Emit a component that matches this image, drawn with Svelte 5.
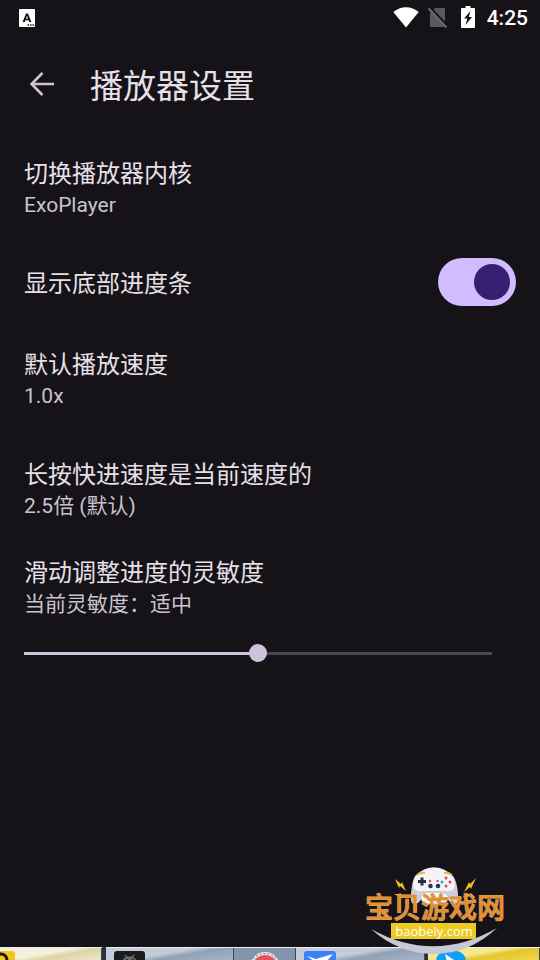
<script>
  let bottomBar = $state(true);
  let sensitivity = $state(5);
  const levels = ['很低', '较低', '适中', '较高', '很高'];
  let level = $derived(levels[Math.min(4, Math.floor(sensitivity / 2.2))]);
</script>

<svelte:head><title>播放器设置</title></svelte:head>

<div class="page">
  <header class="status">
    <svg class="notice" width="16" height="18" viewBox="0 0 16 18" aria-hidden="true">
      <rect width="16" height="18" rx="1" fill="#fff" />
      <path d="M3.600 13 7 4.400h2L12.400 13h-2.200l-.6-1.700H6.400L5.800 13ZM7 9.700h2L8 6.800Z" fill="#151218" />
      <path d="M8.500 15.300H10v1.400H8.500ZM11 15.300h1.500v1.400H11ZM13.500 15.300H15v1.400h-1.500Z" fill="#151218" />
    </svg>
    <div class="indicators">
      <svg width="26" height="21" viewBox="0 0 26 21" aria-hidden="true">
        <path d="M13 20.500.300 4.900C4 2 8.300.300 13 .300S22 2 25.700 4.900Z" fill="#fff" />
      </svg>
      <svg class="sim" width="20" height="21" viewBox="0 0 20 21" aria-hidden="true">
        <path d="M7 1h9q1 0 1 1v17q0 1-1 1H3q-1 0-1-1V6Z" fill="#5b595e" />
        <path d="M2.200.500 20 19.300" stroke="#151218" stroke-width="2" />
        <path d="M.500 1.500 18.500 20.500" stroke="#6b696d" stroke-width="2" />
      </svg>
      <svg class="battery" width="14" height="22" viewBox="0 0 14 22" aria-hidden="true">
        <path d="M4.500 0h5v2H13q1 0 1 1v18q0 1-1 1H1q-1 0-1-1V3q0-1 1-1h3.500Z" fill="#fff" />
        <path d="M9.500 5 3 12.500h3.300L4.500 19 11 11H7.800Z" fill="#151218" />
      </svg>
      <time>4:25</time>
    </div>
  </header>

  <div class="appbar">
    <button class="back" aria-label="返回">
      <svg width="24" height="24" viewBox="0 0 24 24" aria-hidden="true">
        <path d="M24 12H2M12.500 1 1.500 12l11 11" fill="none" stroke="#cac5cd" stroke-width="2.600" />
      </svg>
    </button>
    <h1>播放器设置</h1>
  </div>

  <main>
    <button class="row">
      <span class="name">切换播放器内核</span>
      <span class="value">ExoPlayer</span>
    </button>
    <div class="row toggle">
      <label class="name" for="bottom-bar">显示底部进度条</label>
      <input id="bottom-bar" type="checkbox" role="switch" bind:checked={bottomBar} />
    </div>
    <button class="row">
      <span class="name">默认播放速度</span>
      <span class="value">1.0x</span>
    </button>
    <button class="row">
      <span class="name">长按快进速度是当前速度的</span>
      <span class="value">2.5倍 (默认)</span>
    </button>
    <div class="row slide">
      <label class="name" for="sensitivity">滑动调整进度的灵敏度</label>
      <span class="value">当前灵敏度：{level}</span>
      <input
        id="sensitivity"
        type="range"
        min="0"
        max="10"
        bind:value={sensitivity}
        style="--fill: {sensitivity * 10}%"
      />
    </div>
  </main>

  <footer class="tasks" aria-hidden="true">
    <div class="task cream">
      <svg width="15" height="11" viewBox="0 0 15 11">
        <path d="M0 0h12q3 0 3 3v8H0Z" fill="#f5c51c" />
        <circle cx="1" cy="9" r="6" fill="none" stroke="#17140c" stroke-width="3" />
      </svg>
    </div>
    <div class="task steel droid">
      <svg width="31" height="11" viewBox="0 0 31 11">
        <path d="M0 11V3q0-3 3-3h25q3 0 3 3v8Z" fill="#1b1b1b" />
        <path d="M8 11q1-4 4-5l-2-2 1-.500 2.500 2h4l2.500-2 1 .500-2 2q3 1 4 5Z" fill="#696969" />
        <path d="M12 8h1.500v1.500H12ZM18 8h1.500v1.500H18Z" fill="#1b1b1b" />
      </svg>
    </div>
    <div class="task slate">
      <svg width="32" height="11" viewBox="0 0 32 11">
        <circle cx="16" cy="16" r="15" fill="#e9edf2" />
        <circle cx="16" cy="17" r="13" fill="#e25454" />
        <path d="M4 8Q15-3 28 8" fill="none" stroke="#8e4a55" stroke-dasharray="2 2" />
      </svg>
    </div>
    <div class="task steel bird">
      <svg width="32" height="11" viewBox="0 0 32 11">
        <path d="M0 11V3q0-3 3-3h26q3 0 3 3v8Z" fill="#3b82f6" />
        <path d="m3 5 9 3L29 3 22 11H11Z" fill="#fff" />
      </svg>
    </div>
    <div class="task gold">
      <svg width="30" height="11" viewBox="0 0 30 11">
        <path d="M0 11q0-9 9-11h12q9 2 9 11Z" fill="#0ea0f2" />
        <path d="m9 3 12 8H11Z" fill="#fff" />
      </svg>
    </div>
  </footer>

  <svg class="mark" width="150" height="94" viewBox="0 0 150 94" aria-label="宝贝游戏网 baobeiy.com" role="img">
    <path d="M11 63Q74 98 137 62 109 88 74 88 39 88 11 63Z" fill="#c9c8d5" />
    <g>
      <path d="M55 10Q63 1.500 74 1.500T93 10q4 5 5 18 1 11-4 10-5-1-8-8H63q-3 7-8 8-5 1-4-10 1-13 4-18Z" fill="#cfced9" />
      <path d="M55 11Q63 1.500 74 1.500T93 11q3 6 1 12-4 3-9 2H63q-5 1-9-2-2-6 1-12Z" fill="#f4f4f7" />
      <path d="M60 31Q62 26 68 26H80Q86 26 89 31l-4 7H64Z" fill="#f7f7fa" stroke="#b9b8c7" />
      <path d="M57 9q4-3 8-2M84 7q4-1 8 2" fill="none" stroke="#e4b548" stroke-width="2" />
      <path d="M62 11.500v8M58 15.500h8" stroke="#1d3445" stroke-width="3" />
      <g fill="#e74450">
        <circle cx="86" cy="12" r="1.500" /><circle cx="86" cy="20" r="1.500" />
        <circle cx="90" cy="16" r="1.500" />
        <circle cx="70" cy="15" r="1.200" /><circle cx="77.500" cy="15" r="1.200" />
      </g>
      <circle cx="82" cy="16" r="1.500" fill="#35a7cd" />
      <circle cx="70.500" cy="20" r="2.300" fill="#243b50" /><circle cx="78" cy="20" r="2.300" fill="#243b50" />
    </g>
    <path
      d="m35 13 6 5 1-2 4 9-6-5-1 2ZM34 28l5 0 1-1 4 4-5 0-1-1ZM116 12l-6 6-1-2-5 10 6-5 1 2ZM113 28l-5 0-1-1-4 4 5 0 1-1Z"
      fill="#f1bd25"
    />
    <text class="brand" x="75" y="52" text-anchor="middle">宝贝游戏网</text>
    <rect x="31" y="57" width="85" height="16" fill="#edc922" />
    <text class="site" x="74" y="70" text-anchor="middle">baobeiy.com</text>
  </svg>
</div>

<style>
  :global(body) {
    margin: 0;
    background: #151218;
  }
  .page {
    position: relative;
    display: flex;
    flex-direction: column;
    min-height: 100vh;
    background: #151218;
    color: #e7e0e8;
    font-family: Roboto, 'Noto Sans CJK SC', sans-serif;
  }
  svg {
    display: block;
    flex: none;
  }
  button {
    padding: 0;
    border: 0;
    background: none;
    color: inherit;
    font: inherit;
    text-align: left;
    cursor: pointer;
  }
  .status {
    display: flex;
    align-items: center;
    justify-content: space-between;
    height: 36px;
    padding: 0 12px 0 19px;
  }
  .indicators {
    display: flex;
    align-items: center;
  }
  .indicators svg {
    margin-bottom: 2px;
  }
  .sim {
    margin-left: 9px;
  }
  .battery {
    margin: 0 12px 0 13px;
  }
  time {
    color: #fff;
    font-size: 21px;
    font-weight: 500;
    line-height: 36px;
  }
  .appbar {
    display: flex;
    align-items: center;
    gap: 24px;
    height: 96px;
    padding: 0 18px;
  }
  .back {
    display: grid;
    place-items: center;
    width: 48px;
    height: 48px;
  }
  h1 {
    margin: 0;
    padding-top: 6px;
    font-size: 33px;
    font-weight: 400;
    line-height: 48px;
  }
  main {
    display: flex;
    flex-direction: column;
    padding: 2px 0 24px;
  }
  .row {
    display: flex;
    flex-direction: column;
    padding: 24px;
  }
  .name {
    font-size: 24px;
    line-height: 32px;
  }
  .value {
    color: #cac4cf;
    font-size: 21px;
    line-height: 30px;
  }
  .toggle {
    flex-direction: row;
    align-items: flex-start;
    justify-content: space-between;
    padding: 14px 24px 19px;
  }
  .toggle .name {
    padding-top: 10px;
  }
  .toggle input {
    appearance: none;
    box-sizing: border-box;
    display: flex;
    justify-content: flex-start;
    width: 78px;
    height: 48px;
    margin: 0;
    padding: 6px;
    border-radius: 24px;
    background: #49454f;
  }
  .toggle input::before {
    content: '';
    width: 36px;
    height: 36px;
    border-radius: 50%;
    background: #938f99;
  }
  .toggle input:checked {
    justify-content: flex-end;
    background: #d1bcff;
  }
  .toggle input:checked::before {
    background: #381e72;
  }
  .slide {
    padding: 12px 48px 24px 24px;
  }
  .slide input {
    appearance: none;
    width: 100%;
    height: 18px;
    margin: 25px 0 0;
    background: linear-gradient(90deg, #cbc2db var(--fill), #49464c var(--fill)) center / 100% 3px no-repeat;
  }
  .slide input::-webkit-slider-thumb {
    appearance: none;
    width: 18px;
    height: 18px;
    border-radius: 50%;
    background: #cbc2db;
  }
  .tasks {
    display: flex;
    height: 13px;
    margin-top: auto;
    overflow: hidden;
    background: #29323d;
  }
  .task {
    box-sizing: border-box;
    flex: 128 1 0;
    min-width: 0;
    padding-top: 3px;
    border-top: 1px solid #e9eef2;
    box-shadow: inset -1px 0 #3d4854;
  }
  .cream {
    flex-grow: 102;
    margin-right: 4px;
    background: linear-gradient(170deg, #f3f0df 45%, #ddd5a6 60%, #ebe6c8);
  }
  .steel {
    background: linear-gradient(170deg, #c4ced9 45%, #91a1b5 60%, #a6b4c5);
  }
  .slate {
    flex-grow: 62;
    background: #8395ac;
  }
  .slate svg {
    margin-left: 15px;
  }
  .droid svg,
  .bird svg,
  .gold svg {
    margin-left: 8px;
  }
  .bird {
    flex-grow: 129;
    margin-right: 3px;
  }
  .gold {
    flex-grow: 112;
    background: linear-gradient(170deg, #f6e88e 45%, #e4c52c 60%, #f0d84e);
  }
  .mark {
    position: absolute;
    right: 30px;
    bottom: 0;
    pointer-events: none;
  }
  .brand {
    fill: #e58f2a;
    stroke: #d9a878;
    stroke-width: 1px;
    paint-order: stroke;
    font-size: 28px;
    font-weight: 500;
    font-family: 'Liberation Sans', 'Noto Sans CJK SC', sans-serif;
  }
  .site {
    fill: #fff;
    font-size: 13px;
    font-weight: 500;
    font-family: 'Open Sans', sans-serif;
  }
</style>
